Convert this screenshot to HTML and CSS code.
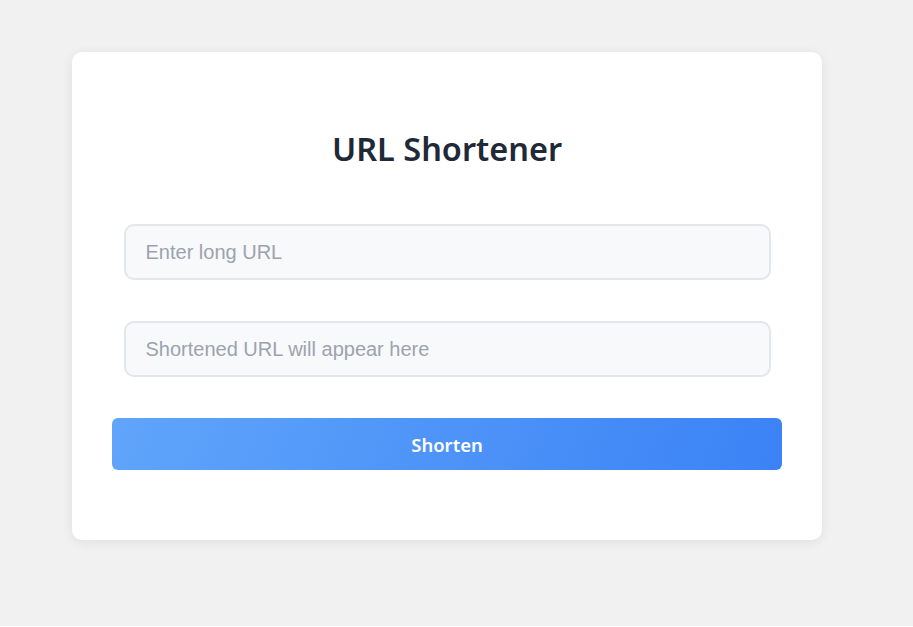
FILE: index.html
```html
<!DOCTYPE html>
<html lang="en">
<head>
<meta charset="utf-8">
<title>URL Shortener</title>
<link rel="stylesheet" href="styles.css">
</head>
<body>
<main class="page">
  <section class="card">
    <h1 class="title">URL Shortener</h1>
    <div class="fields">
      <input class="field" type="text" placeholder="Enter long URL">
      <input class="field" type="text" placeholder="Shortened URL will appear here" readonly>
    </div>
    <button class="btn" type="button">Shorten</button>
  </section>
</main>
</body>
</html>
```
FILE: styles.css
```css
html {
  background: #ffffff;
}
body {
  margin: 0;
  height: 626px;
  background: #f1f1f1;
  font-family: "Noto Sans", "Open Sans", sans-serif;
}
.page {
  padding: 52px 0 0 72px;
}
.card {
  box-sizing: border-box;
  width: 750px;
  height: 488px;
  background: #ffffff;
  border-radius: 10px;
  box-shadow: 0 2px 12px rgba(0, 0, 0, 0.08);
  padding: 77px 40px 40px;
  display: flex;
  flex-direction: column;
}
.title {
  margin: 0;
  text-align: center;
  font-size: 32.5px;
  font-weight: 600;
  line-height: 40px;
  color: #1f2937;
}
.fields {
  display: flex;
  flex-direction: column;
  align-items: center;
  gap: 41px;
  margin-top: 55px;
}
.field {
  box-sizing: border-box;
  width: 647px;
  height: 56px;
  border: 2px solid #e3e6ea;
  border-radius: 10px;
  background: #f8f9fa;
  padding: 0 20px;
  font-family: "Liberation Sans", Arial, sans-serif;
  font-size: 20px;
  color: #374151;
  outline: none;
}
.field::placeholder {
  color: #9ca3af;
}
.btn {
  margin-top: 41px;
  height: 52px;
  width: 100%;
  border: none;
  border-radius: 6px;
  background: linear-gradient(110deg, #60a5fa 0%, #3b82f6 100%);
  color: #ffffff;
  font-family: "Noto Sans", "Open Sans", sans-serif;
  font-size: 18.5px;
  font-weight: 600;
  cursor: pointer;
}
```
